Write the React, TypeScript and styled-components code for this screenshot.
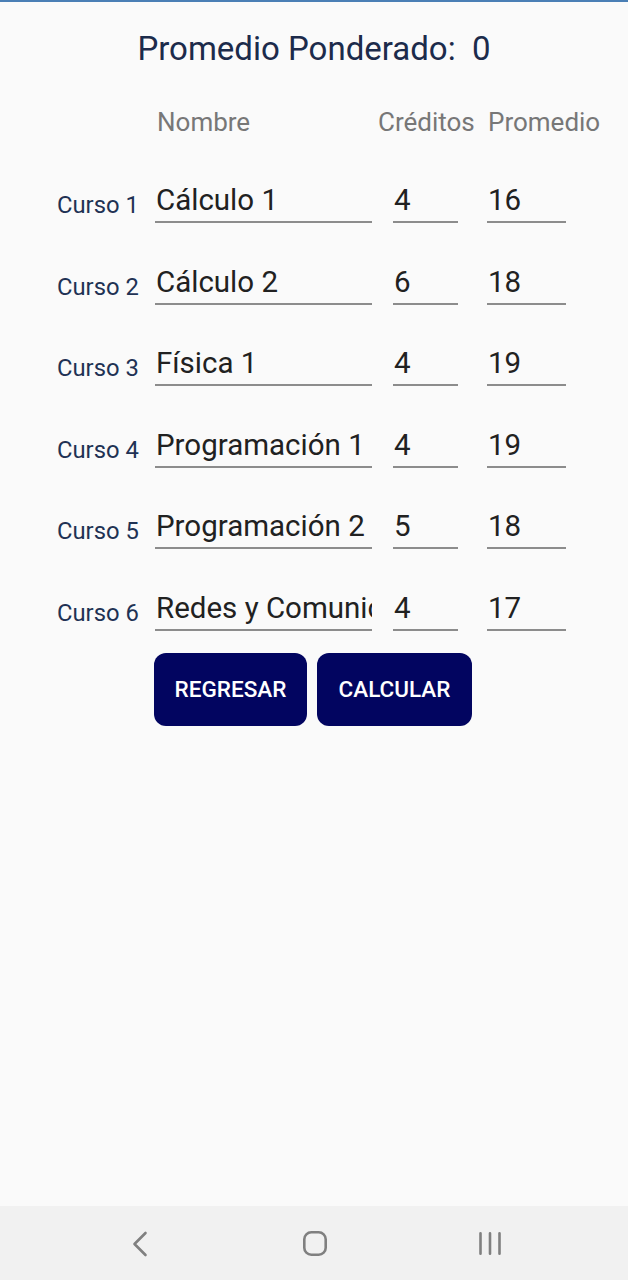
import React from "react";
import styled, { createGlobalStyle } from "styled-components";

const Global = createGlobalStyle`
  html, body { margin: 0; padding: 0; background: #fafafa; }
  body { font-family: Roboto, "Noto Sans", sans-serif; }
  * { box-sizing: border-box; }
`;

const Page = styled.div`
  height: 1280px;
  display: flex;
  flex-direction: column;
  background: #fafafa;
  border-top: 2px solid #4a7fb5;
`;

const Main = styled.main`
  flex: 1;
  display: flex;
  flex-direction: column;
`;

const Title = styled.h1`
  margin: 0;
  padding-top: 29px;
  text-align: center;
  font-weight: 400;
  font-size: 33px;
  line-height: 36px;
  color: #1c2b4b;
  white-space: pre;
`;

const Table = styled.div`
  display: flex;
  flex-direction: column;
  padding-left: 57px;
  margin-top: 40px;
`;

const HeaderRow = styled.div`
  display: flex;
  height: 30px;
  align-items: center;
`;

const HeaderCell = styled.div<{ $width: number; $ml: number }>`
  width: ${(p) => p.$width}px;
  margin-left: ${(p) => p.$ml}px;
  font-size: 26px;
  line-height: 30px;
  color: #777;
  white-space: nowrap;
`;

const Rows = styled.div`
  display: flex;
  flex-direction: column;
  gap: 41.6px;
  margin-top: 46px;
`;

const Row = styled.div`
  display: flex;
  align-items: flex-end;
`;

const Label = styled.div`
  width: 98px;
  font-size: 23.8px;
  line-height: 26px;
  color: #1f3254;
  padding-bottom: 5px;
  white-space: nowrap;
`;

const Field = styled.div<{ $width: number; $ml: number }>`
  width: ${(p) => p.$width}px;
  margin-left: ${(p) => p.$ml}px;
  height: 40px;
  padding: 0 0 4px 1px;
  font-size: 29.5px;
  line-height: 34px;
  color: #212121;
  border-bottom: 2px solid #8c8c8c;
  white-space: nowrap;
  overflow: hidden;
  text-overflow: clip;
`;

const Buttons = styled.div`
  display: flex;
  gap: 10px;
  padding-left: 154px;
  margin-top: 22px;
`;

const Button = styled.button<{ $width: number }>`
  width: ${(p) => p.$width}px;
  height: 73px;
  border: none;
  border-radius: 12px;
  background: #020560;
  color: #fff;
  font-family: Roboto, sans-serif;
  font-weight: 500;
  font-size: 22.5px;
  padding: 0;
`;

const NavBar = styled.nav`
  height: 74px;
  background: #f1f1f1;
  display: flex;
  align-items: center;
  gap: 145px;
  padding-left: 125px;
`;

const NavIcon = styled.svg`
  width: 30px;
  height: 30px;
  stroke: #808080;
  fill: none;
  stroke-width: 2.6;
  stroke-linecap: round;
  stroke-linejoin: round;
`;

const courses = [
  ["Cálculo 1", "4", "16"],
  ["Cálculo 2", "6", "18"],
  ["Física 1", "4", "19"],
  ["Programación 1", "4", "19"],
  ["Programación 2", "5", "18"],
  ["Redes y Comunicaciones", "4", "17"],
];

export default function App() {
  return (
    <>
      <Global />
      <Page>
        <Main>
          <Title>{"Promedio Ponderado:  0"}</Title>
          <Table>
            <HeaderRow>
              <HeaderCell $width={221} $ml={100}>Nombre</HeaderCell>
              <HeaderCell $width={110} $ml={0}>Créditos</HeaderCell>
              <HeaderCell $width={120} $ml={0}>Promedio</HeaderCell>
            </HeaderRow>
            <Rows>
              {courses.map((c, i) => (
                <Row key={i}>
                  <Label>Curso {i + 1}</Label>
                  <Field $width={217} $ml={0}>{c[0]}</Field>
                  <Field $width={65} $ml={21}>{c[1]}</Field>
                  <Field $width={79} $ml={29}>{c[2]}</Field>
                </Row>
              ))}
            </Rows>
          </Table>
          <Buttons>
            <Button $width={153}>REGRESAR</Button>
            <Button $width={155}>CALCULAR</Button>
          </Buttons>
        </Main>
        <NavBar>
          <NavIcon viewBox="0 0 30 30">
            <path d="M20.5 5 L9.5 16 L20.5 27" />
          </NavIcon>
          <NavIcon viewBox="0 0 30 30">
            <rect x="4.3" y="4.3" width="21.4" height="22.4" rx="7" />
          </NavIcon>
          <NavIcon viewBox="0 0 30 30">
            <path d="M5.5 5.3 V25.7 M15 5.3 V25.7 M24.5 5.3 V25.7" />
          </NavIcon>
        </NavBar>
      </Page>
    </>
  );
}
